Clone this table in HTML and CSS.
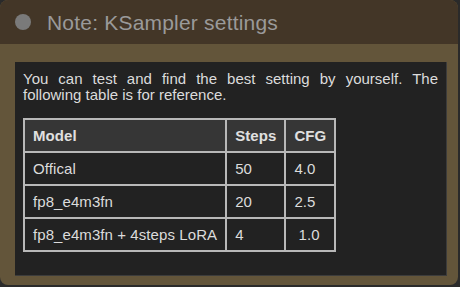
FILE: index.html
```html
<!DOCTYPE html>
<html>
<head>
<meta charset="utf-8">
<link rel="stylesheet" href="styles.css">
</head>
<body>
<div class="node">
  <div class="header">
    <span class="dot"></span>
    <span class="title">Note: KSampler settings</span>
  </div>
  <div class="body">
    <div class="note">
      <p class="intro">You can test and find the best setting by yourself. The following table is for reference.</p>
      <table class="tbl">
        <thead>
          <tr><th class="c1">Model</th><th class="c2">Steps</th><th class="c3">CFG</th></tr>
        </thead>
        <tbody>
          <tr><td>Offical</td><td>50</td><td>4.0</td></tr>
          <tr><td>fp8_e4m3fn</td><td>20</td><td>2.5</td></tr>
          <tr><td>fp8_e4m3fn + 4steps LoRA</td><td>4</td><td>&nbsp;1.0</td></tr>
        </tbody>
      </table>
    </div>
  </div>
</div>
</body>
</html>
```
FILE: styles.css
```css
html, body {
  margin: 0;
  padding: 0;
  background: #2a2a2a;
  width: 460px;
  height: 287px;
  overflow: hidden;
}
.node {
  width: 458px;
  height: 285px;
  background: #63553a;
  border-radius: 8px;
  overflow: hidden;
  display: flex;
  flex-direction: column;
  font-family: "Liberation Sans", Arial, sans-serif;
}
.header {
  height: 44px;
  background: #433627;
  display: flex;
  align-items: center;
  box-sizing: border-box;
  padding-left: 15px;
}
.dot {
  width: 16px;
  height: 16px;
  border-radius: 50%;
  background: #7a7a7a;
  flex: none;
}
.title {
  margin-left: 16px;
  font-size: 21px;
  letter-spacing: 0.2px;
  color: #9a9a9a;
  line-height: 1;
}
.body {
  flex: 1;
  padding: 18px 11px 9px 15px;
  display: flex;
}
.note {
  flex: 1;
  background: #222222;
  border-right: 1px solid #3c3c3c;
  border-bottom: 1px solid #3c3c3c;
  padding: 9px 8px 0 8px;
  color: #dcdcdc;
  font-size: 15px;
}
.intro {
  margin: 0 0 15px 0;
  line-height: 16px;
  text-align: justify;
}
.tbl {
  border-collapse: collapse;
  font-size: 15px;
  letter-spacing: 0.08px;
}
.tbl th, .tbl td {
  border: 2px solid #b8b8b8;
  height: 33px;
  box-sizing: border-box;
  padding: 0 8px;
  text-align: left;
  vertical-align: middle;
}
.tbl th {
  background: #363636;
  font-weight: bold;
  color: #e0e0e0;
}
.tbl td {
  background: #222222;
}
```
